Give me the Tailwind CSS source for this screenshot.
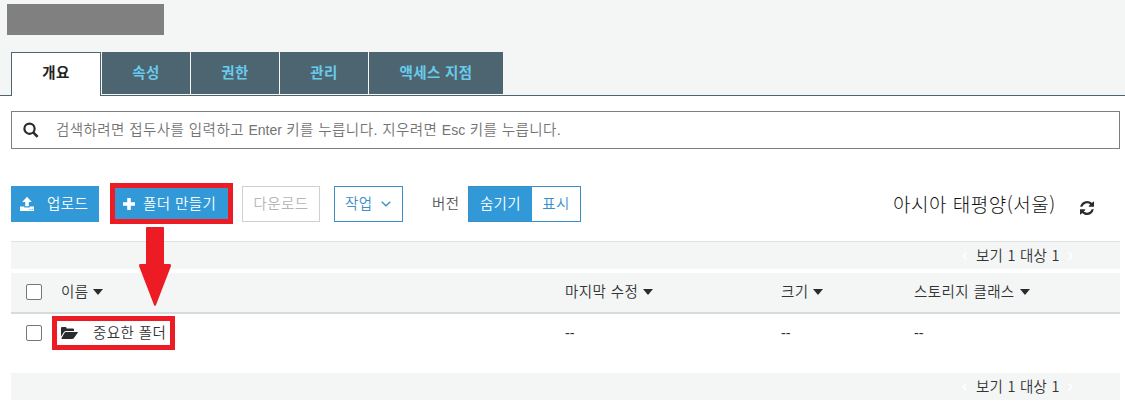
<!DOCTYPE html>
<html lang="ko">
<head>
<meta charset="utf-8">
<title>버킷 개요</title>
<script src="https://cdn.jsdelivr.net/npm/@tailwindcss/browser@4"></script>
</head>
<body class="relative h-[405px] w-[1125px] overflow-hidden bg-white font-['Liberation_Sans','Noto_Sans_CJK_KR',sans-serif] text-[14.5px] leading-5 font-[350] tracking-[0.4px] whitespace-nowrap text-[#333]">
<header class="flex h-24 flex-col border-b border-[#4d6471] bg-[#f4f6f6] pt-1">
  <div class="ml-[7px] h-[31px] w-[157px] shrink-0 bg-[#808080]"></div>
  <nav class="mt-[17px] ml-[11px] flex h-[43px] shrink-0 items-start gap-px font-bold text-[#68cbec]">
    <a class="flex h-11 w-[90px] shrink-0 items-center justify-center border border-b-0 border-[#4d6471] bg-white pb-[3px] text-[#222]">개요</a>
    <a class="flex h-[42px] w-[88px] items-center justify-center bg-[#4d6471]">속성</a>
    <a class="flex h-[42px] w-[88px] items-center justify-center bg-[#4d6471]">권한</a>
    <a class="flex h-[42px] w-[88px] items-center justify-center bg-[#4d6471]">관리</a>
    <a class="flex h-[42px] w-[134px] items-center justify-center bg-[#4d6471]">액세스 지점</a>
  </nav>
</header>
<main class="mr-[5px] ml-[11px]">
  <div class="mt-[15px] flex h-[38px] items-center border border-[#7f7f7f] pl-[11px] text-[#737373]">
    <svg class="h-4 w-4" viewBox="0 0 16 16" fill="none" stroke="#2b2b2b"><circle cx="6.5" cy="6.7" r="5.1" stroke-width="2.2"/><path d="M10.2 10.400L14.600 14.800" stroke-width="2.6"/></svg>
    <span class="ml-[17px] text-[14.5px] tracking-[0.43px]">검색하려면 접두사를 입력하고 <span class="text-[14px] tracking-normal">Enter</span> 키를 누릅니다. 지우려면 <span class="text-[14px] tracking-normal">Esc</span> 키를 누릅니다.</span>
  </div>
  <div class="mt-[34px] flex h-[41px] items-center">
    <button class="flex h-9 w-[88px] items-center bg-[#3199d8] pl-[9px] text-white">
      <svg class="h-4 w-[14px]" viewBox="0 0 14 16" fill="white"><path d="M7 .8L11.800 6H8.800V10.300H5.200V6H2.200Z"/><path d="M0 10.500H4.300V11.600H9.700V10.500H14V15H0Z"/><path d="M9.500 13h1v1h-1zM11.700 13h1v1h-1z" fill="#3199d8"/></svg>
      <span class="ml-[13px]">업로드</span>
    </button>
    <button class="ml-[11px] flex h-[41px] w-[123px] items-center border-5 border-[#ed1c24] bg-[#3199d8] pl-2 text-white">
      <svg class="h-3 w-3" viewBox="0 0 12 12"><path d="M6 0V12M0 6H12" stroke="white" stroke-width="3.6"/></svg>
      <span class="ml-2">폴더 만들기</span>
    </button>
    <button class="ml-[9px] flex h-9 w-[78px] items-center justify-center border border-[#d0d0d0] text-[#b5b5b5]">다운로드</button>
    <button class="ml-[14px] flex h-9 w-[69px] items-center border border-[#3d8ec4] pl-[10px] text-[#3b8fc8]"><span>작업</span>
      <svg class="ml-[9px] h-[6px] w-[10px]" viewBox="0 0 10 6" fill="none" stroke="#3b8fc8" stroke-width="1.4"><path d="M.7.7L5 4.8L9.3.7"/></svg>
    </button>
    <span class="ml-[29px] w-9 text-[#555]">버전</span>
    <div class="flex h-9 w-[113px] border border-[#3d8ec4]">
      <button class="w-[63px] bg-[#3199d8] text-white">숨기기</button><button class="w-12 text-[#3b8fc8]">표시</button>
    </div>
    <span class="ml-auto w-[187px] pt-px font-['Noto_Sans_CJK_KR',sans-serif] text-[19px] font-light tracking-[0.5px] text-[#111]">아시아 태평양(서울)</span>
    <svg class="mt-2 mr-[26px] h-[14px] w-[14px]" viewBox="0 0 1536 1536" fill="#2b2b2b"><path d="M1511 928q0 5-1 7-64 268-268 434.500T764 1536q-146 0-282.500-55T238 1324l-129 129q-19 19-45 19t-45-19-19-45V960q0-26 19-45t45-19h448q26 0 45 19t19 45-19 45l-137 137q71 66 161 102t187 36q134 0 250-65t186-179q11-17 53-117 8-23 30-23h192q13 0 22.500 9.500t9.500 22.500zM1536 128v448q0 26-19 45t-45 19h-448q-26 0-45-19t-19-45 19-45l138-138Q969 256 768 256q-134 0-250 65T332 500q-11 17-53 117-8 23-30 23H50q-13 0-22.500-9.500T18 608v-7q65-268 270-434.500T768 0q146 0 284 55.500T1297 212l130-129q19-19 45-19t45 19 19 45z"/></svg>
  </div>
  <div class="mt-[17px] flex h-7 items-center justify-end border-t border-[#dfe3e3] bg-[#f4f6f6] pr-[47px] font-['Noto_Sans_CJK_KR',sans-serif]">
    <svg class="h-2 w-[5px]" viewBox="0 0 5 8" fill="none" stroke="white" stroke-width="1.4"><path d="M4.3.5L1 4L4.3 7.5"/></svg><span class="ml-[9px] w-[92px] pb-0.5 tracking-[0.25px]">보기 1 대상 1</span><svg class="h-2 w-[5px]" viewBox="0 0 5 8" fill="none" stroke="white" stroke-width="1.4"><path d="M.7.5L4 4L.7 7.5"/></svg>
  </div>
  <div class="mt-1 grid h-[41px] grid-cols-[50px_504px_216px_133px_1fr] items-center border-b-2 border-[#d8dbdb] bg-[#f4f6f6] pb-px">
    <span class="ml-[15px] h-4 w-4 rounded-[2px] border border-[#767676] bg-white"></span>
    <div class="flex items-center gap-[5px]"><span>이름</span><svg class="h-[6px] w-[10px]" viewBox="0 0 10 6" fill="#2b2b2b"><path d="M0 0H10L5 6Z"/></svg></div>
    <div class="flex items-center gap-[5px]"><span>마지막 수정</span><svg class="h-[6px] w-[10px]" viewBox="0 0 10 6" fill="#2b2b2b"><path d="M0 0H10L5 6Z"/></svg></div>
    <div class="flex items-center gap-[5px]"><span>크기</span><svg class="h-[6px] w-[10px]" viewBox="0 0 10 6" fill="#2b2b2b"><path d="M0 0H10L5 6Z"/></svg></div>
    <div class="flex items-center gap-[5px]"><span>스토리지 클래스</span><svg class="h-[6px] w-[10px]" viewBox="0 0 10 6" fill="#2b2b2b"><path d="M0 0H10L5 6Z"/></svg></div>
  </div>
  <div class="mt-[2px] grid h-[34px] grid-cols-[41px_513px_216px_133px_1fr] items-center">
    <span class="ml-[15px] h-4 w-4 rounded-[2px] border border-[#767676] bg-white"></span>
    <div class="flex h-[34px] w-[123px] items-center border-5 border-[#ed1c24] pl-1">
      <svg class="h-3 w-[17px]" viewBox="0 0 17 12" fill="#2b2b2b"><path d="M0 9.500V1Q0 0 1 0H4.500Q5.500 0 5.500 1V1.500H12Q13 1.500 13 2.500V4H5Q3.800 4 3 5Z"/><path d="M4.800 5H16.500Q17.300 5 16.700 5.800L13 11Q12.300 12 11.200 12H1Q0 12 .6 11L3.600 5.800Q4 5 4.800 5Z"/></svg>
      <span class="ml-[15px]">중요한 폴더</span>
    </div>
    <span class="tracking-normal">--</span><span class="tracking-normal">--</span><span class="tracking-normal">--</span>
  </div>
  <div class="mt-[23px] flex h-[27px] items-center justify-end bg-[#f4f6f6] pr-[47px] font-['Noto_Sans_CJK_KR',sans-serif]">
    <svg class="h-2 w-[5px]" viewBox="0 0 5 8" fill="none" stroke="white" stroke-width="1.4"><path d="M4.3.5L1 4L4.3 7.5"/></svg><span class="ml-[9px] w-[92px] pb-0.5 tracking-[0.25px]">보기 1 대상 1</span><svg class="h-2 w-[5px]" viewBox="0 0 5 8" fill="none" stroke="white" stroke-width="1.4"><path d="M.7.5L4 4L.7 7.5"/></svg>
  </div>
</main>
<svg class="absolute top-[227px] left-[139px] h-[79px] w-8" viewBox="0 0 32 79" fill="#ed1c24"><path d="M8 0H24Q25 0 25 1V37H31Q32 37 32 39L17 78Q16 80 15 78L0 39Q0 37 1 37H7V1Q7 0 8 0Z"/></svg>
</body>
</html>
